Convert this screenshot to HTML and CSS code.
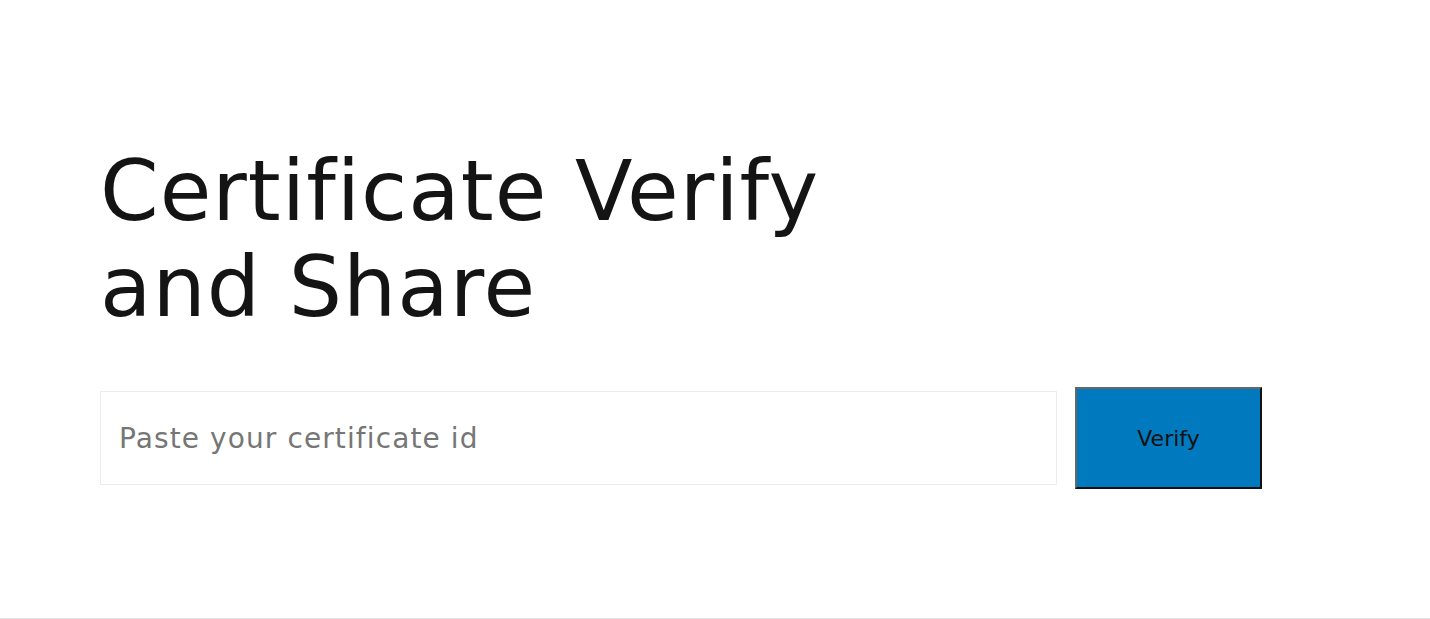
FILE: index.html
```html
<!DOCTYPE html>
<html lang="en">
<head>
    <meta charset="UTF-8">
    <meta name="viewport" content="width=device-width, initial-scale=1.0">
    <title>Certificate Verify and Share</title>
    <link rel="stylesheet" href="styles.css">
</head>
<body>

    <section class="hero">
        <h1 class="title">Certificate Verify<br>and Share</h1>

        <form class="verify-form" onsubmit="return false;">
            <input type="text" class="cert-input" placeholder="Paste your certificate id">
            <button type="submit" class="verify-btn">Verify</button>
        </form>
    </section>

    <div class="divider"></div>

</body>
</html>
```

FILE: styles.css
```css
body {
    font-family: 'DejaVu Sans', 'Liberation Sans', sans-serif;
    background: #fff;
    color: #111;
    margin: 0;
    padding: 0;
}
.hero {
    height: 618px;
    box-sizing: border-box;
    padding: 143px 100px 0 100px;
}
.title {
    margin: 0;
    font-size: 84px;
    font-weight: 400;
    line-height: 96px;
    letter-spacing: 1px;
    color: #141414;
}
.verify-form {
    display: flex;
    align-items: center;
    gap: 18px;
    margin-top: 52px;
}
.cert-input {
    width: 957px;
    height: 94px;
    box-sizing: border-box;
    border: 1px solid #ececec;
    padding: 0 18px;
    font-family: inherit;
    font-size: 28px;
    letter-spacing: 1.1px;
    color: #333;
    outline: none;
}
.cert-input::placeholder {
    color: #767676;
}
.verify-btn {
    width: 187px;
    height: 102px;
    padding: 0;
    background: #0079bf;
    border: 2px solid;
    border-color: #666 #111 #111 #666;
    font-family: inherit;
    font-size: 22px;
    color: #111;
    cursor: pointer;
}
.divider {
    border-top: 1px solid #e6e6e6;
}
```
